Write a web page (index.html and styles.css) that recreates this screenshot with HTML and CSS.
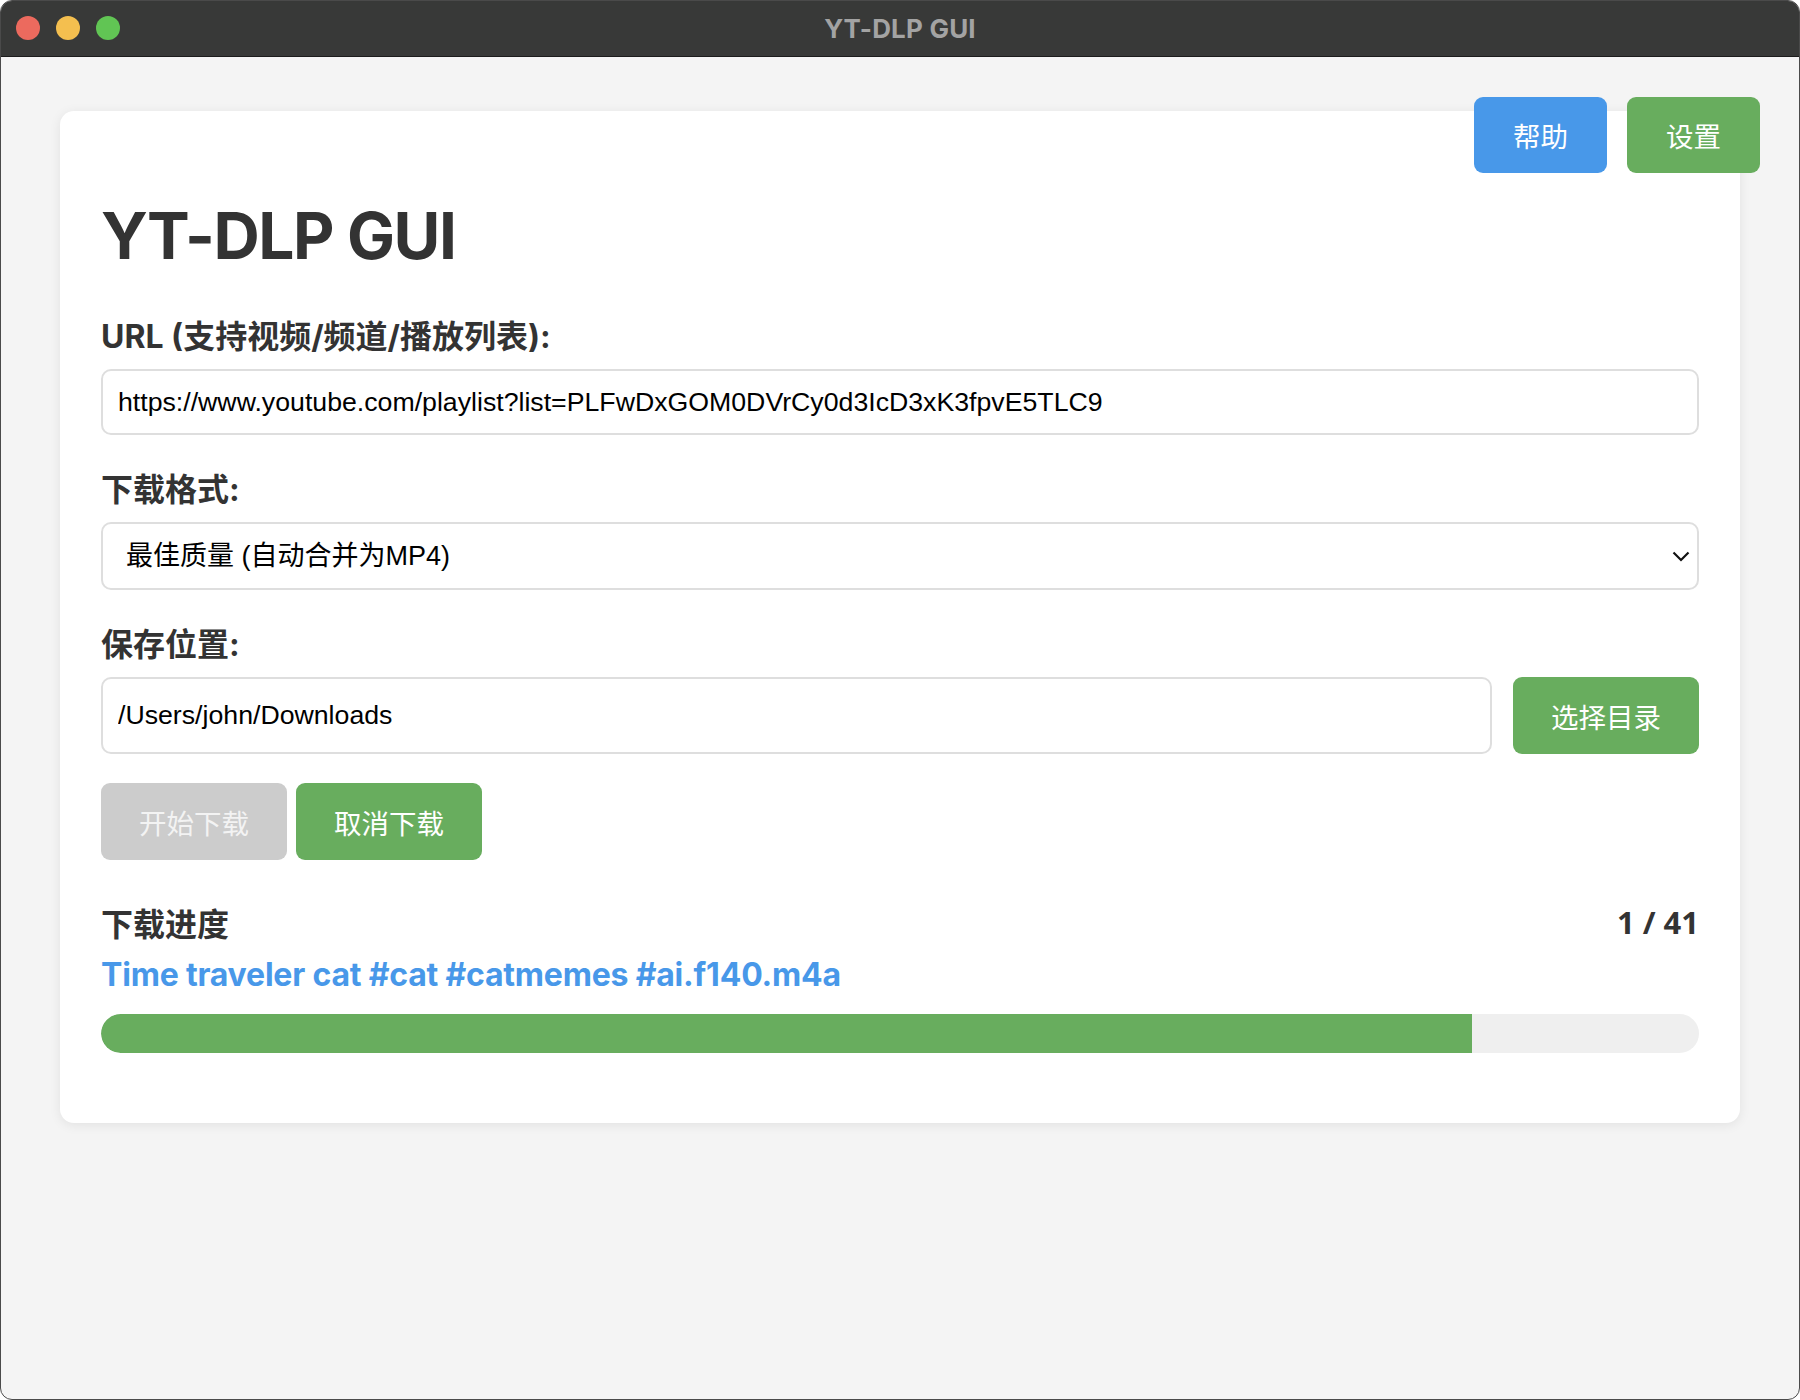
FILE: index.html
```html
<!DOCTYPE html>
<html lang="zh-CN">
<head>
  <meta charset="UTF-8">
  <title>YT-DLP GUI</title>
  <link rel="stylesheet" href="styles.css">
</head>
<body>
  <div class="window">
    <div class="titlebar">
      <div class="lights">
        <span class="light red"></span>
        <span class="light yellow"></span>
        <span class="light green"></span>
      </div>
      <div class="win-title">YT-DLP GUI</div>
    </div>

    <div class="app">
      <div class="top-actions">
        <button class="btn btn-blue">帮助</button>
        <button class="btn btn-green">设置</button>
      </div>

      <div class="card">
        <h1>YT-DLP GUI</h1>

        <div class="field">
          <label>URL (支持视频/频道/播放列表):</label>
          <input type="text" class="url-input" value="https://www.youtube.com/playlist?list=PLFwDxGOM0DVrCy0d3IcD3xK3fpvE5TLC9">
        </div>

        <div class="field">
          <label>下载格式:</label>
          <div class="select-wrap">
            <select class="format-select">
              <option>最佳质量 (自动合并为MP4)</option>
              <option>仅音频 (M4A)</option>
            </select>
            <svg class="chevron" width="18" height="11" viewBox="0 0 18 11"><polyline points="1.5,1.5 9,9 16.5,1.5" fill="none" stroke="#111" stroke-width="2.2"/></svg>
          </div>
        </div>

        <div class="field">
          <label>保存位置:</label>
          <div class="path-row">
            <input type="text" class="path-input" value="/Users/john/Downloads">
            <button class="btn btn-green">选择目录</button>
          </div>
        </div>

        <div class="actions">
          <button class="btn btn-disabled" disabled>开始下载</button>
          <button class="btn btn-green">取消下载</button>
        </div>

        <div class="progress-head">
          <span class="progress-label">下载进度</span>
          <span class="progress-count">1 / 41</span>
        </div>
        <div class="file-name">Time traveler cat #cat #catmemes #ai.f140.m4a</div>
        <div class="progress-track">
          <div class="progress-fill" style="width: 85.8%"></div>
        </div>
      </div>
    </div>
  </div>
</body>
</html>
```

FILE: styles.css
```css
html, body { margin: 0; padding: 0; background: #ffffff; }
body { font-family: "Inter", "Noto Sans CJK SC", sans-serif; }

.window { width: 1800px; height: 1400px; border-radius: 12px; overflow: hidden; display: flex; flex-direction: column; background: #f4f4f4; box-sizing: border-box; border: 1px solid #4a4a4a; }

.titlebar { height: 56px; flex-shrink: 0; background: #383938; border-bottom: 1px solid #1c1c1c; box-sizing: border-box; display: flex; align-items: center; justify-content: center; position: relative; }
.lights { position: absolute; left: 15px; top: 15px; display: flex; gap: 16px; }
.light { width: 24px; height: 24px; border-radius: 50%; display: block; }
.light.red { background: #ec6a5e; }
.light.yellow { background: #f4bf4f; }
.light.green { background: #61c554; }
.win-title { color: #a3a3a3; font-size: 26px; font-weight: 700; letter-spacing: 0.2px; }

.app { flex: 1; position: relative; padding: 54px 59px 0; }
.top-actions { position: absolute; top: 40px; right: 39px; display: flex; gap: 20px; }

.card { background: #fff; border-radius: 14px; box-shadow: 0 2px 12px rgba(0,0,0,0.08); padding: 86px 41px 70px; }

h1 { margin: 0 0 44px; font-size: 64px; line-height: 77px; font-weight: 700; color: #333; letter-spacing: -1.4px; }

.field { margin-bottom: 36px; }
.field label { display: block; font-size: 32px; line-height: 38px; font-weight: 700; color: #333; margin-bottom: 13px; }

input, select { font-family: "Liberation Sans", "Noto Sans CJK SC", sans-serif; color: #000; box-sizing: border-box; border: 2px solid #dedede; border-radius: 10px; background: #fff; outline: none; }
.url-input { width: 100%; height: 66px; padding: 0 15px; font-size: 26.7px; }

.select-wrap { position: relative; }
.format-select { width: 100%; height: 68px; padding: 0 23px; font-size: 27px; appearance: none; -webkit-appearance: none; }
.chevron { position: absolute; right: 9px; top: 29px; pointer-events: none; }

.path-row { display: flex; gap: 21px; }
.path-input { flex: 1; height: 77px; padding: 0 15px; font-size: 26.7px; }

.btn { font-family: "Noto Sans CJK SC", sans-serif; font-size: 27.5px; color: #fff; border: none; border-radius: 9px; height: 77px; padding: 0 38px; cursor: pointer; }
.btn-blue { background: #4898e9; }
.btn-green { background: #68ad5e; }
.btn-disabled { background: #cccccc; color: #f3f3f3; cursor: default; }
.top-actions .btn { padding: 0 39px; height: 76px; }

.actions { display: flex; gap: 9px; margin-top: -7px; margin-bottom: 43px; }

.progress-head { display: flex; justify-content: space-between; align-items: center; height: 38px; }
.progress-label { font-size: 32px; font-weight: 700; color: #333; }
.progress-count { font-family: "Open Sans", sans-serif; font-size: 31px; font-weight: 700; color: #333; }

.file-name { margin-top: 15px; font-size: 32px; line-height: 38px; font-weight: 700; color: #4898e9; letter-spacing: -0.2px; }

.progress-track { margin-top: 20px; height: 39px; background: #efefef; border-radius: 20px; overflow: hidden; }
.progress-fill { height: 100%; background: #68ad5e; border-radius: 20px 0 0 20px; }
```
